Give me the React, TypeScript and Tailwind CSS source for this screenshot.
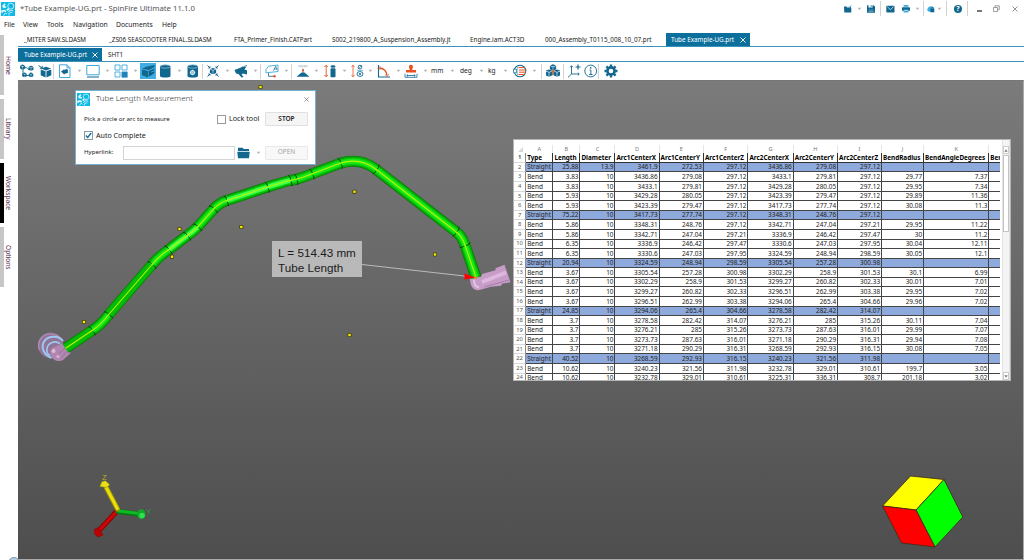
import React from "react";

const INK = "#12678f";
const SKY = "#3fa9dc";
const RED = "#e8501f";

type IconProps = { children: React.ReactNode; className?: string; box?: string };

function Icon({ children, className = "ml-1", box = "0 0 14 14" }: IconProps) {
  return (
    <svg viewBox={box} className={`h-[14px] w-[14px] shrink-0 ${className}`} fill="none" stroke={INK} strokeWidth={1}>
      {children}
    </svg>
  );
}

function Caret({ className = "ml-[5px]" }: { className?: string }) {
  return (
    <svg viewBox="0 0 5 4" className={`h-1 w-[5px] shrink-0 ${className}`}>
      <path d="M.6 .8h3.8L2.5 3z" fill="#b4b4b4" />
    </svg>
  );
}

function Sep({ className = "ml-1" }: { className?: string }) {
  return <div className={`h-[15px] w-px shrink-0 bg-[#d3d3d3] ${className}`} />;
}

function Logo({ className }: { className: string }) {
  return (
    <svg viewBox="0 0 14 14" className={className}>
      <rect width="14" height="14" fill="#0db9e6" />
      <circle cx="9.8" cy="4.1" r="3" fill="none" stroke="#fff" strokeWidth=".7" />
      <path d="M1 4.2 3.4 1.2l1.3 1L3.4 4l2 .6-.6 1.2L2.6 6zM0 8.6l3-.9 2.5 1-.7 1.4-2.6-.5L1 11.4zM5.4 7.2l2-1 1 1.3-1.8 1.4z" fill="#e9fbff" />
      <path d="M7 10.5c1-2 3-2.600 5-1.700M8.200 13.500c-1-2 1-3.500 3-2.800M2.500 13.500l2-2.500 1.500 1.200" fill="none" stroke="#e9fbff" strokeWidth=".9" />
    </svg>
  );
}

function Cube({ x, y, s, tone = INK }: { x: number; y: number; s: number; tone?: string }) {
  return (
    <g transform={`translate(${x} ${y}) scale(${s})`} stroke="none">
      <path d="M0-5 4.600-3.400 0-1.700 -4.600-3.400z" fill={tone} />
      <path d="M-4.800-2.600 -.4-.9V4.800L-4.800 2.700z" fill={tone} />
      <path d="M4.800-2.600 .4-.9V4.800L4.800 2.700z" fill={tone} />
    </g>
  );
}

function TitleBar() {
  return (
    <div className="flex h-[17px] items-center">
      <Logo className="ml-[1px] h-[14px] w-[14px]" />
      <span className="ml-[5px] w-[200px] text-[7.750px] whitespace-nowrap text-[#555]">*Tube Example-UG.prt - SpinFire Ultimate 11.1.0</span>
      <div className="ml-auto flex h-4 items-center">
        <svg viewBox="0 0 8 8" className="h-2 w-2"><path d="M0 1.500h2.600l.6 1h2l1.600-.5.500 1.200L7.300 7.400H.3z" fill={INK} /><path d="M4.500 2.500 7.400.7" stroke={SKY} strokeWidth="1" /></svg>
        <Caret className="ml-[5px]" />
        <svg viewBox="0 0 8 8" className="ml-[5px] h-2 w-2"><path d="M0 .3h1.500v2.200h4V.3h1L8 1.500v6.300H0z" fill={INK} /><path d="M3.600.2h1v1.600h-1z" fill={INK} /><path d="M1.500 5h5M1.500 6.500h5" stroke="#8fc1d8" strokeWidth=".6" /></svg>
        <Sep className="ml-[5px]" />
        <svg viewBox="0 0 9 8" className="ml-[5px] h-2 w-[9px]"><rect x=".3" y=".8" width="8.200" height="6.600" rx=".7" fill={INK} /><path d="m1.300 1.700 3.100 3 3.100-3" fill="none" stroke="#d9edf6" strokeWidth=".8" /></svg>
        <svg viewBox="0 0 8 8" className="ml-[7px] h-2 w-2"><rect y="2.300" width="8" height="3.500" rx=".6" fill={INK} /><path d="M1.600 0h4.800v1.700H1.600zM1.600 4.600h4.800v3H1.600z" fill={SKY} /><path d="M2.300 5.600h3.400" stroke="#fff" strokeWidth=".6" /></svg>
        <Caret className="ml-[5px]" />
        <Sep className="ml-[3px]" />
        <svg viewBox="0 0 8 8" className="ml-[3px] h-2 w-2"><path d="M.3 5.600C0 3 2 1.200 3.800 1.600 5 .9 6.600 1.700 7 3.300v3.400H2z" fill={SKY} /><path d="M3.500 3.600h3.800v3.700H3.500z" fill={INK} /><path d="M4.500 3.500V2.600h1.800v.9" stroke={INK} strokeWidth=".6" fill="none" /></svg>
        <Caret className="ml-[2px]" />
        <Sep className="ml-[4px]" />
        <div className="ml-[7px] flex h-[8px] w-[8px] items-center justify-center rounded-full bg-[#12678f] text-[7px] leading-none font-bold text-white">?</div>
        <Sep className="ml-[5px]" />
        <div className="mt-[5px] ml-[9px] h-[1.500px] w-[5px] bg-[#777]" />
        <svg viewBox="0 0 7 7" className="ml-[11px] h-[7px] w-[7px]"><path d="M.5 2.500h4v4h-4zM2 2.500V.8h4.300v3.900H4.500" fill="none" stroke="#888" strokeWidth=".8" /></svg>
        <svg viewBox="0 0 6 6" className="mr-[6px] ml-[12px] h-[6px] w-[6px]"><path d="m.5.5 5 5m0-5-5 5" stroke="#777" strokeWidth=".8" /></svg>
      </div>
    </div>
  );
}

function MenuBar() {
  return (
    <div className="flex h-[16px] items-center text-[6.800px] leading-none text-[#222]">
      <span className="ml-1 w-[19px]">File</span>
      <span className="w-[24px]">View</span>
      <span className="w-[26px]">Tools</span>
      <span className="w-[43px]">Navigation</span>
      <span className="w-[46px]">Documents</span>
      <span>Help</span>
    </div>
  );
}

function TabClose() {
  return (
    <svg viewBox="0 0 6 6" className="h-[6px] w-[6px]"><path d="m.5.5 5 5m0-5-5 5" stroke="#fff" strokeWidth=".9" /></svg>
  );
}

function DocumentTabs() {
  return (
    <div className="flex h-[14px] shrink-0 items-center border-b border-[#3b93b9] text-[6.300px] leading-none whitespace-nowrap text-[#222]">
      <span className="w-[91px] pt-[2px] pl-[6px]">_MITER SAW.SLDASM</span>
      <span className="w-[125px] pt-[2px]">_ZS06 SEASCOOTER FINAL.SLDASM</span>
      <span className="w-[98px] pt-[2px]">FTA_Primer_Finish.CATPart</span>
      <span className="w-[138px] pt-[2px]">S002_219800_A_Suspension_Assembly.jt</span>
      <span className="w-[75px] pt-[2px]">Engine.iam.ACT3D</span>
      <span className="w-[121px] pt-[2px]">000_Assembly_T0115_008_10_07.prt</span>
      <div className="flex h-full w-[84px] items-center justify-between bg-[#0d6f9c] pt-px pr-1 pl-[5px] text-white">
        <span className="pt-px">Tube Example-UG.prt</span>
        <TabClose />
      </div>
    </div>
  );
}

function SheetTabs() {
  return (
    <div className="flex h-[15px] shrink-0 items-end border-b border-[#3b93b9] text-[6.300px] leading-none text-[#222]">
      <div className="flex h-[13px] w-[84px] items-center justify-between bg-[#0d6f9c] pr-1 pl-[6px] text-white">
        <span className="pt-[2px]">Tube Example-UG.prt</span>
        <TabClose />
      </div>
      <div className="flex h-[13px] items-center pt-[2px] pl-[6px]">SHT1</div>
    </div>
  );
}

function Toolbar() {
  return (
    <div className="flex h-[18px] shrink-0 items-center text-[6.600px] leading-none text-[#222]">
      <Icon className="ml-[2px]">
        <path d="M3 4v7.500h6M3.500 3.700h3c1.500 0 1 1.800 2.500 1.800" strokeWidth=".9" />
        <Cube x={2.600} y={3.200} s={0.52} /><Cube x={11} y={4.300} s={0.52} /><Cube x={4.500} y={11} s={0.480} /><Cube x={11} y={11} s={0.480} />
      </Icon>
      <Icon>
        <Cube x={8} y={8.300} s={1.100} />
        <path d="M.5 1.500 4 4M4.200 1.800v2.400H1.800" />
      </Icon>
      <Sep className="ml-px" />
      <Icon>
        <path d="M1.500.8h7.500l3 3v9.700H1.500z" stroke={SKY} />
        <path d="M9 .8v3h3" stroke={SKY} />
        <path d="M3 7.500 6.500 5v1.300c2 0 3.300.6 3.700 2.300L8 9.500l-1.500.2v1z" fill={INK} stroke="none" />
        <circle cx="8.500" cy="6.500" r="1.500" fill={INK} stroke="none" />
      </Icon>
      <Caret />
      <Icon><path d="M.8 1.500h12.400v9.300H.8z" stroke={SKY} /><path d="M1 13h12" stroke={INK} /></Icon>
      <Caret />
      <Icon>
        <path d="M1 1h5v5H1zM8 1h5v5H8zM1 8h5v5H1z" stroke={SKY} strokeWidth=".9" />
        <path d="M7.600 7.600h6v6h-6z" fill="#1d84b8" stroke="none" />
      </Icon>
      <Caret />
      <div className="ml-[2px] flex h-4 w-4 items-center justify-center bg-[#41aee3]">
        <svg viewBox="0 0 14 14" className="h-[14px] w-[14px]">
          <path d="m1 4.800 5-2.300 7.500-1.500v2L8 6z" fill={INK} />
          <path d="m1 5.500 6 1.500v6.500l-6-2.300z" fill={INK} />
          <path d="m7.700 7 5.800-2.500v1.700L10 7.700v.8l3.500-1.300v1.700l-5.800 4z" fill="#0f5f86" />
        </svg>
      </div>
      <Icon className="ml-[2px]">
        <path d="M2 2.500v9.500c0 2 10.500 2 10.500 0V2.500z" fill={INK} stroke="none" />
        <ellipse cx="7.250" cy="2.500" rx="5.100" ry="1.700" fill={INK} stroke="#9bcbe0" strokeWidth=".7" />
      </Icon>
      <Caret />
      <Icon>
        <path d="M1.500 2.500v9.500c0 2 10.500 2 10.500 0V2.500z" fill={INK} stroke="none" />
        <ellipse cx="6.750" cy="2.500" rx="5.100" ry="1.700" fill={INK} stroke="#9bcbe0" strokeWidth=".7" />
        <circle cx="6.500" cy="8.500" r="1.900" stroke="#e6f4fa" strokeWidth="1.200" />
        <path d="M6.500 5.700v5.600M3.700 8.500h5.600" stroke="#e6f4fa" strokeWidth=".5" />
      </Icon>
      <Sep className="ml-[2px]" />
      <Icon className="ml-[3px]">
        <Cube x={7} y={7.200} s={0.65} />
        <path d="m1.500 1.500 2.500 2.500m8.500-2.500L10 4M1.500 12.500 4 10m8.500 2.500L10 10" />
        <path d="M2 4h2V2M12 4h-2V2M2 10h2v2M12 10h-2v2" strokeWidth=".7" />
      </Icon>
      <Caret />
      <Icon>
        <path d="M.5 6 7 3.500l1.500-1 3.500.5-1.500 2.500 2.500.7v4.300L9 9.500l-1.500 1 2 2.500-2 .5-3-3.500-2.500-.5z" fill={INK} stroke="none" />
        <path d="m10 2.500 3-1" strokeWidth=".8" />
      </Icon>
      <Caret />
      <Sep className="ml-[2px]" />
      <Icon>
        <path d="M3.500 2.200 13 1v6.500L1 8.800V5.500z" stroke={SKY} strokeWidth=".9" />
        <path d="M3.500 9v3.300H9" stroke={INK} strokeWidth=".8" />
        <path d="m8.500 6.600 2.200-4.400L12.200 6.200M9.300 5h2.400" strokeWidth=".7" />
        <circle cx="9.500" cy="12.300" r="1.200" fill={RED} stroke="none" />
      </Icon>
      <Caret />
      <Sep className="ml-[2px]" />
      <Icon>
        <path d="M.5 12.800 5.500 8.500h3l5 4.300z" fill={INK} stroke="none" />
        <path d="M7 4.500V9" stroke={INK} strokeWidth=".6" />
        <circle cx="7" cy="6.400" r="1.100" fill={RED} stroke="none" />
        <path d="M3 1.200v2m1.300-2v2m1.400-2v2M7 1.200v2m1.400-2v2m1.300-2v2m1.300-2v2" stroke="#8aa7b5" strokeWidth=".6" />
      </Icon>
      <Caret className="ml-1" />
      <Icon>
        <path d="M3.200 1.500v11M1.500 3l1.700-1.800L4.900 3M1.500 11l1.700 1.800L4.900 11" stroke={RED} strokeWidth=".9" />
        <rect x="7.500" y="4.300" width="5" height="9" rx=".8" fill={INK} stroke="none" />
        <ellipse cx="10" cy="2.500" rx="2.500" ry="1.300" fill={INK} stroke="none" />
      </Icon>
      <Caret />
      <Icon className="ml-[3px]">
        <path d="M3 1.500v11M1.500 3 3 1.200 4.500 3M1.500 11 3 12.800 4.500 11" stroke={RED} strokeWidth=".8" />
        <circle cx="10" cy="3.200" r="1.900" strokeWidth=".9" /><path d="m8 5.200 4-4" strokeWidth=".7" />
        <ellipse cx="10" cy="10" rx="3" ry="2.400" strokeWidth=".9" stroke={INK} /><circle cx="10" cy="10" r="1" fill={INK} stroke="none" />
        <path d="M7 6.600h6" stroke={SKY} strokeWidth=".7" />
      </Icon>
      <Caret className="ml-1" />
      <Icon>
        <path d="M1.500 1v12H13" strokeWidth="1.100" stroke={INK} />
        <path d="M2.500 4C7 4.500 9.500 7 10 11.500" stroke={RED} strokeWidth="1.300" />
        <path d="m.5 5 2.500-2.500V6M8 10.500l2.200 2 1.800-2.500" stroke={RED} strokeWidth=".7" />
      </Icon>
      <Caret />
      <Icon className="ml-[3px]">
        <path d="M5.600 1.300C7 .2 9 1 9 3c0 1-.8 1.500-.8 3.200H5.800C5.800 4.500 5 4 5 3c0-.8.2-1.300.6-1.700zM2 6h10v2.500H2z" fill={RED} stroke="none" />
        <path d="M1 9.700v3.600h12V9.700M3 11.500h8M4 10.500l-1.300 1L4 12.500m6-2 1.300 1-1.300 1" strokeWidth=".8" />
      </Icon>
      <Caret />
      <span className="ml-[3px] w-[13px]">mm</span>
      <Caret className="ml-[6px]" />
      <span className="ml-[5px] w-[13px]">deg</span>
      <Caret className="ml-[6px]" />
      <span className="ml-1 w-[10px]">kg</span>
      <Caret />
      <Icon className="ml-[5px]">
        <circle cx="7" cy="7" r="5.800" strokeWidth="1.100" />
        <path d="M.5 5.200h3v3.600h-3z" fill="#fff" stroke={INK} strokeWidth=".7" />
        <path d="M5.500 3.600h6.200M6 6h7M6 8.200h7M5.500 10.500h6.200" stroke={RED} strokeWidth="1" />
        <path d="M5 2.500C3.800 5 3.800 9 5 11.500" stroke={SKY} strokeWidth=".8" />
      </Icon>
      <Caret />
      <Sep />
      <Icon>
        <Cube x={7} y={3.600} s={0.65} /><Cube x={3} y={9.200} s={0.75} /><Cube x={11} y={9.200} s={0.75} />
        <path d="M7 6v5M5.500 8.200 7 6.500 8.500 8.200" stroke={RED} strokeWidth="1" />
      </Icon>
      <Sep className="ml-[3px]" />
      <Icon className="ml-[3px]">
        <path d="M4.500 2v8H12M4.500 10 1 13.300M3.200 3.300 4.500 1.700l1.300 1.600M10.800 8.700l1.500 1.300-1.500 1.300" strokeWidth=".9" />
        <path d="M11 .5v5M8.500 3h5" stroke={INK} strokeWidth="1.200" />
      </Icon>
      <Icon className="ml-[3px]">
        <circle cx="6.700" cy="7" r="5.900" strokeWidth=".9" />
        <path d="M5.500 6h1.400v4.500M5.200 10.500h3.300" strokeWidth=".9" />
        <circle cx="6.700" cy="3.900" r=".8" fill={INK} stroke="none" />
      </Icon>
      <Sep className="ml-0" />
      <Icon className="ml-[5px]">
        <circle cx="7" cy="7" r="3.600" strokeWidth="2.600" />
        <g strokeWidth="2.300"><path d="M7 .5v2.200M7 11.300v2.200M.5 7h2.200M11.300 7h2.200M2.400 2.400 4 4M10 10l1.600 1.600M2.400 11.600 4 10M10 4l1.600-1.600" /></g>
      </Icon>
    </div>
  );
}

function Sidebar() {
  const bar = "w-1 shrink-0 bg-[#c6c6c6]";
  const label = "flex flex-1 items-center justify-center leading-none [writing-mode:vertical-rl]";
  return (
    <div className="flex w-[18px] shrink-0 flex-col gap-1 pt-[2px] text-[6.600px] text-[#5a3158]">
      <div className="flex h-[60px] pr-[6px]"><div className={bar} /><span className={label}>Home</span></div>
      <div className="flex h-[60px] pr-[6px]"><div className={bar} /><span className={label}>Library</span></div>
      <div className="flex h-[60px] pr-[6px]"><div className="w-1 shrink-0 bg-black" /><span className={label}>Workspace</span></div>
      <div className="flex h-[60px] pr-[6px]"><div className={bar} /><span className={label}>Options</span></div>
    </div>
  );
}

const TUBE =
  "M65.700 348.300 L91.700 330.700 Q101 325 108.300 315 L151.700 265 Q159 256 168.300 250 L186.700 236 Q192.500 232 197.300 227.300 L213.300 209.300 Q219 203 226 200.700 L266.700 187.300 Q280 183 290 180.500 L296 179.300 Q303 177.500 311.700 174 L340 163.300 Q360 157 376 169.300 L456 231.700 Q462 236 465 245 L476 277.300";

const SEAMS: [number, number, number][] = [
  [91.700, 330.700, -35], [108.300, 315, -49], [151.700, 265, -49], [168.300, 250, -38],
  [186.700, 236, -40], [197.300, 227.300, -47], [213.300, 209.300, -46], [226, 200.700, -20],
  [267, 187.300, -18], [290, 180.500, -14], [296, 179.300, -14], [311.700, 174, -20],
  [340, 163.300, -20], [376, 169.300, 38], [456, 231.700, 39], [465, 245, 70],
];

const DOTS: [number, number][] = [
  [260.500, 87], [354.500, 191.700], [241.300, 227], [179.500, 229], [172, 256.700], [435, 254.500], [349.500, 335], [84, 322],
];

function Scene() {
  return (
    <svg viewBox="18 81 1005 478" preserveAspectRatio="none" className="absolute inset-0 h-full w-full" fill="none">
      <circle cx="50.500" cy="345.200" r="12.700" fill="#917596" />
      <path d="M39.500 350c-3-9 3-16 11-16 6 0 10 3 12 7" stroke="#b28fb8" strokeWidth="1.200" />
      <path d="M63 341c-4-6-16-6-19.500 1.500-2.500 6 .5 12 8 15.500" stroke="#9fc6f0" strokeWidth="2" />
      <path d="M60 343.500c-5-3.500-12-1-13 5-.5 3 .5 5.500 3 7" stroke="#9fc6f0" strokeWidth="1.600" />
      <path d="M63.500 343 70.800 353 63 360c-5 3-12-.5-12.500-6.500-.3-4 2-6.500 5-7z" fill="#b187b2" />
      <path d="m66 347.500-7 6M68 350l-6.500 7.500" stroke="#966e98" strokeWidth=".9" />
      <circle cx="53.500" cy="351" r="2" fill="#dcbbdd" /><circle cx="58" cy="356.500" r="1.500" fill="#d7b2d9" />

      <path d="M470 278c0 8 3 13 9.500 12l10.500-3 1-.3 10-1 1-2 8.500-1.500-6-17.500-9 3.500v2L482 274l-1 3z" fill="#c79dc8" />
      <path d="m482 282 24-9.500" stroke="#deb9df" strokeWidth="4" />
      <path d="m484 287 25-7" stroke="#a67ca8" strokeWidth="1" />
      <path d="M474 280c0 4 2 7 5 7.500" stroke="#e4c4e5" strokeWidth="2" />

      <g strokeLinejoin="round">
        <path d={TUBE} stroke="#087d08" strokeWidth="11" />
        <path d={TUBE} stroke="#07a507" strokeWidth="9.600" />
        <path d={TUBE} stroke="#08c808" strokeWidth="7.400" />
        <path d={TUBE} stroke="#16e81a" strokeWidth="5" />
        <path d="M168.300 250 L186.700 236 Q192.500 232 197.300 227.300M226 200.700 L266.700 187.300 Q280 183 290 180.500" stroke="#3dff4f" strokeWidth="4.500" />
        <path d="M65.700 348.300 91.700 330.700M108.300 315 L151.700 265" stroke="#05bd05" strokeWidth="7" />
        <path d={TUBE} stroke="#b8f500" strokeWidth="1.100" />
      </g>
      {SEAMS.map(([x, y, a], i) => (
        <path key={i} transform={`translate(${x} ${y}) rotate(${a})`} d="M-.5-5.400Q1.800-3 .8-1M.8 1.500Q1.500 4 .3 5.800" stroke="#073c07" strokeWidth=".9" />
      ))}
      {DOTS.map(([x, y], i) => (
        <g key={i}><rect x={x - 2} y={y - 2} width="4" height="4" rx="1" fill="#433f08" /><rect x={x - 1.200} y={y - 1.200} width="2.400" height="2.400" fill="#f5ee00" /></g>
      ))}

      <path d="M362 264.500 466 276.200" stroke="#c4c4c4" strokeWidth=".9" />
      <path d="m464.500 273.500 11 4-11 2z" fill="#f00" />
      <circle cx="475.500" cy="277.700" r="1.300" fill="#ff7a00" />

      <g strokeLinecap="round">
        <path d="m117 511-17 18.500" stroke="#8f0000" strokeWidth="5" /><path d="m117 511-17 18.500" stroke="#cb0808" strokeWidth="3.200" />
        <path d="M118 511.500 138 514" stroke="#067a14" strokeWidth="5" /><path d="M119 511 138 513.300" stroke="#0fbb22" strokeWidth="2.800" />
        <path d="M117.500 509 106.500 488" stroke="#a39a00" strokeWidth="5" /><path d="M117.300 508.500 106.500 488" stroke="#eadf10" strokeWidth="3" />
      </g>
      <path d="M94 529.500 98.500 527.500l4.500 7.500-5 2-3-2.500z" fill="#b80303" stroke="#8f0000" strokeWidth=".5" />
      <path d="m99.800 486.500 2.200-5 3.500-.7 4.300 4-3.500 2.700z" fill="#e8df18" stroke="#8e8800" strokeWidth=".5" />
      <ellipse cx="141.300" cy="514.300" rx="4.200" ry="5" fill="#12a82c" /><circle cx="142" cy="515.500" r="2.800" fill="#2ee04a" />

      <g stroke="#402b17" strokeWidth=".8" strokeLinejoin="round">
        <path d="m910.500 476 33.500 3.500-28 30.500-33.500-4z" fill="#ff0" />
        <path d="m944 479.500 18.800 37.500-27.800 30-19-37z" fill="#0f0" />
        <path d="m882.500 506 33.500 4 19 37-33.500-4z" fill="#f00" />
      </g>
    </svg>
  );
}

function MeasurementDialog() {
  return (
    <div className="absolute top-[9px] left-[57px] flex h-[75px] w-[241px] flex-col border border-[#72b2cf] bg-white pr-[7px] pl-2 text-[6.150px] leading-none text-[#222]">
      <div className="-ml-[7px] flex h-4 items-center">
        <Logo className="h-[13px] w-[13px]" />
        <span className="ml-[6px] text-[7.900px] font-light text-[#333]">Tube Length Measurement</span>
        <svg viewBox="0 0 6 6" className="mr-[-1px] ml-auto h-[5px] w-[5px]"><path d="m.5.5 5 5m0-5-5 5" stroke="#777" strokeWidth=".9" /></svg>
      </div>
      <div className="mt-[5px] flex h-[14px] items-center">
        <span>Pick a circle or arc to measure</span>
        <div className="ml-auto h-[9px] w-[9px] border border-[#999]" />
        <span className="ml-[3px] w-[36px] text-[7.200px] whitespace-nowrap">Lock tool</span>
        <div className="flex h-[14px] w-[43px] items-center justify-center rounded-[1px] border border-[#e0e0e0] bg-[#f5f5f5] text-[6.500px] font-semibold">STOP</div>
      </div>
      <div className="mt-[5px] flex h-[9px] items-center">
        <div className="flex h-[9px] w-[9px] items-center justify-center border border-[#8c9aa2]">
          <svg viewBox="0 0 7 7" className="h-[7px] w-[7px]"><path d="m.8 3.500 1.900 2L6.200 1" fill="none" stroke="#0b6d9c" strokeWidth="1.300" /></svg>
        </div>
        <span className="ml-[3px] text-[7.100px]">Auto Complete</span>
      </div>
      <div className="mt-[5px] flex h-[15px] items-center">
        <span className="w-[39px]">Hyperlink:</span>
        <div className="h-[14px] w-[112px] border border-[#d4d4d4]" />
        <svg viewBox="0 0 13 12" className="ml-[2px] h-3 w-[13px]"><path d="M1 .8h4.500L6.700 2H12v2H1zM.3 4.800h12.400l-.7 6.400H1z" fill={INK} /></svg>
        <Caret className="ml-[6px]" />
        <div className="ml-auto flex h-[14px] w-[43px] items-center justify-center rounded-[1px] border border-[#e8e8e8] bg-[#f8f8f8] text-[6.500px] text-[#a3a3a3]">OPEN</div>
      </div>
    </div>
  );
}

const COLS = [
  "w-[27.200px]", "w-[27.100px]", "w-[35px]", "w-[44.100px]", "w-[44.400px]", "w-[44.500px]",
  "w-[45.300px]", "w-[44.300px]", "w-[44px]", "w-[42px]", "w-[65.300px]", "w-[30px]",
];

const HEAD = ["Type", "Length", "Diameter", "Arc1CenterX", "Arc1CenterY", "Arc1CenterZ", "Arc2CenterX", "Arc2CenterY", "Arc2CenterZ", "BendRadius", "BendAngleDegrees", "Ber"];

const ROWS = `Straight 25.88 13.9 3461.9 272.53 297.12 3436.86 279.08 297.12
Bend 3.83 10 3436.86 279.08 297.12 3433.1 279.81 297.12 29.77 7.37
Bend 3.83 10 3433.1 279.81 297.12 3429.28 280.05 297.12 29.95 7.34
Bend 5.93 10 3429.28 280.05 297.12 3423.39 279.47 297.12 29.89 11.36
Bend 5.93 10 3423.39 279.47 297.12 3417.73 277.74 297.12 30.08 11.3
Straight 75.22 10 3417.73 277.74 297.12 3348.31 248.76 297.12
Bend 5.86 10 3348.31 248.76 297.12 3342.71 247.04 297.21 29.95 11.22
Bend 5.86 10 3342.71 247.04 297.21 3336.9 246.42 297.47 30 11.2
Bend 6.35 10 3336.9 246.42 297.47 3330.6 247.03 297.95 30.04 12.11
Bend 6.35 10 3330.6 247.03 297.95 3324.59 248.94 298.59 30.05 12.1
Straight 20.94 10 3324.59 248.94 298.59 3305.54 257.28 300.98
Bend 3.67 10 3305.54 257.28 300.98 3302.29 258.9 301.53 30.1 6.99
Bend 3.67 10 3302.29 258.9 301.53 3299.27 260.82 302.33 30.01 7.01
Bend 3.67 10 3299.27 260.82 302.33 3296.51 262.99 303.38 29.95 7.02
Bend 3.67 10 3296.51 262.99 303.38 3294.06 265.4 304.66 29.96 7.02
Straight 24.85 10 3294.06 265.4 304.66 3278.58 282.42 314.07
Bend 3.7 10 3278.58 282.42 314.07 3276.21 285 315.26 30.11 7.04
Bend 3.7 10 3276.21 285 315.26 3273.73 287.63 316.01 29.99 7.07
Bend 3.7 10 3273.73 287.63 316.01 3271.18 290.29 316.31 29.94 7.08
Bend 3.7 10 3271.18 290.29 316.31 3268.59 292.93 316.15 30.08 7.05
Straight 40.52 10 3268.59 292.93 316.15 3240.23 321.56 311.98
Bend 10.62 10 3240.23 321.56 311.98 3232.78 329.01 310.61 199.7 3.05
Bend 10.62 10 3232.78 329.01 310.61 3225.31 336.31 308.7 201.18 3.02`
  .split("\n")
  .map((line) => line.split(" "));

function RowNumber({ n }: { n: number }) {
  return <div className="flex w-[12.200px] shrink-0 items-center justify-center border-r border-b border-[#d9d9d9] border-r-[#888] pt-px text-[5.800px] text-[#555]">{n}</div>;
}

function Sheet() {
  return (
    <div className="absolute top-[58px] left-[495px] flex h-[242px] w-[498px] border border-[#b5b5b5] bg-white leading-none text-[#222]">
      <div className="w-[486px] overflow-hidden">
        <div className="flex h-[13.300px] items-end text-[5.600px] text-[#777]">
          <div className="flex h-[8px] w-[12.200px] shrink-0 items-center justify-center">
            <svg viewBox="0 0 5 5" className="h-[5px] w-[5px]"><path d="M5 0v5H0z" fill="#d8d8d8" /></svg>
          </div>
          {COLS.map((w, i) => (
            <div key={i} className={`${w} flex h-[8px] shrink-0 items-center justify-center border-r border-[#e6e6e6]`}>{i < 11 ? "ABCDEFGHIJK"[i] : ""}</div>
          ))}
        </div>
        <div className="flex h-[9.580px] text-[6.350px] font-bold text-black">
          <RowNumber n={1} />
          {HEAD.map((h, i) => (
            <div key={h} className={`${COLS[i]} flex shrink-0 items-center border-r border-b border-[#333] pt-px pl-[1px] whitespace-nowrap`}>{h}</div>
          ))}
        </div>
        {ROWS.map((row, r) => (
          <div key={r} className="flex h-[9.580px] text-[6.400px]">
            <RowNumber n={r + 2} />
            {COLS.map((w, c) => (
              <div
                key={c}
                className={`${w} flex shrink-0 items-center border-r border-b border-[#444] px-[1px] pt-px ${c ? "justify-end" : ""} ${row[0] === "Straight" ? "bg-[#8ea9db]" : ""}`}
              >
                {row[c]}
              </div>
            ))}
          </div>
        ))}
      </div>
      <div className="ml-[2px] flex w-2 flex-col border-x border-[#e2e2e2] bg-[#f4f4f4] pt-[6px]">
        <div className="flex h-2 items-center justify-center border border-[#ccc] bg-white"><svg viewBox="0 0 4 3" className="h-[3px] w-1"><path d="M2 .3 3.700 2.700H.3z" fill="#777" /></svg></div>
        <div className="mt-px h-[77px] border border-[#c4c4c4] bg-white" />
        <div className="mt-auto flex h-2 items-center justify-center border border-[#ccc] bg-white"><svg viewBox="0 0 4 3" className="h-[3px] w-1"><path d="M2 2.700.3.300h3.400z" fill="#777" /></svg></div>
      </div>
    </div>
  );
}

function Viewport() {
  return (
    <div className="relative flex-1 overflow-hidden border-t border-r border-b border-t-[#777] border-r-[#aaa] border-b-[#aaa] bg-linear-to-b from-[#7b7b7b] to-[#4e4e4e]">
      <Scene />
      <div className="absolute top-[160px] left-[254px] flex h-9 w-[90px] flex-col justify-center bg-[#b9b9b9] pt-px pl-[6px] font-['Liberation_Sans'] text-[11.700px] leading-[15px] whitespace-nowrap text-[#1c1c1c]">
        <span>L = 514.43 mm</span>
        <span>Tube Length</span>
      </div>
      <span className="absolute top-[393px] left-[84px] font-['Liberation_Sans'] text-[8px] leading-none text-[#b5ae22]">Z</span>
      <span className="absolute top-[427px] left-[128px] font-['Liberation_Sans'] text-[8px] leading-none text-[#21a13a]">Y</span>
      <MeasurementDialog />
      <Sheet />
    </div>
  );
}

export default function App() {
  return (
    <div className="relative flex h-[560px] w-[1024px] flex-col overflow-hidden bg-white font-['Noto_Sans',sans-serif]">
      <TitleBar />
      <MenuBar />
      <div className="flex min-h-0 flex-1">
        <Sidebar />
        <div className="flex min-w-0 flex-1 flex-col">
          <DocumentTabs />
          <SheetTabs />
          <Toolbar />
          <Viewport />
        </div>
      </div>
      <div className="absolute top-[557px] left-[8px] h-3 w-3 rounded-full border border-[#7b93a6] bg-[#b9cfdf]" />
    </div>
  );
}
